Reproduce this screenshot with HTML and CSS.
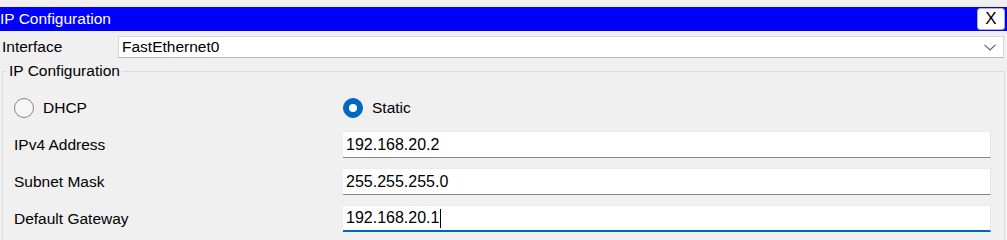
FILE: index.html
```html
<!DOCTYPE html>
<html lang="en">
<head>
  <meta charset="UTF-8" />
  <meta name="viewport" content="width=device-width, initial-scale=1.0"/>
  <title>IP Configuration</title>
  <link rel="stylesheet" href="styles.css">
</head>
<body>
  <div class="window">
    <div class="titlebar">
      <span class="title">IP Configuration</span>
      <button class="close-btn">X</button>
    </div>

    <div class="interface-row">
      <span class="interface-label">Interface</span>
      <div class="select">
        <span>FastEthernet0</span>
        <svg class="chevron" width="12" height="7" viewBox="0 0 12 7">
          <path d="M0.5 0.8 L6 6 L11.5 0.8" fill="none" stroke="#606060" stroke-width="1.1"/>
        </svg>
      </div>
    </div>

    <fieldset class="ip-group">
      <legend>IP Configuration</legend>
      <div class="form">
        <div class="radio-row">
          <label class="radio"><span class="dot"></span>DHCP</label>
          <label class="radio checked"><span class="dot"></span>Static</label>
        </div>
        <div class="field">
          <span class="field-label">IPv4 Address</span>
          <div class="textbox">192.168.20.2</div>
        </div>
        <div class="field">
          <span class="field-label">Subnet Mask</span>
          <div class="textbox">255.255.255.0</div>
        </div>
        <div class="field">
          <span class="field-label">Default Gateway</span>
          <div class="textbox focused">192.168.20.1<span class="caret"></span></div>
        </div>
      </div>
    </fieldset>
  </div>
</body>
</html>
```

FILE: styles.css
```css
body {
  margin: 0;
  font-family: 'Liberation Sans', Arial, sans-serif;
  font-size: 15.5px;
  background-color: #f0f0f0;
  color: #000;
  overflow: hidden;
}

.window {
  padding-top: 7px;
}

.titlebar {
  height: 24px;
  background-color: #0000ff;
  color: white;
  display: flex;
  justify-content: space-between;
  align-items: center;
}

.title {
  line-height: 24px;
}

.close-btn {
  width: 28px;
  height: 22px;
  margin-right: 2px;
  padding: 0;
  background-color: white;
  border: 1px solid #b4b4b4;
  border-radius: 3px;
  font-family: 'Liberation Sans', Arial, sans-serif;
  font-size: 17px;
  color: #000;
}

.interface-row {
  display: flex;
  align-items: center;
  margin-top: 5px;
  height: 22px;
}

.interface-label {
  width: 116px;
  padding-left: 2px;
}

.select {
  flex: 1;
  margin-right: 3px;
  height: 20px;
  display: flex;
  align-items: center;
  justify-content: space-between;
  padding: 0 7px 0 3px;
  background-color: white;
  border: 1px solid #d6d6d6;
  border-bottom-color: #b8b8b8;
}

.chevron {
  display: block;
}

.ip-group {
  margin: 4px 2px 0 2px;
  padding: 18px 13px 30px 4px;
  border: 1px solid #dcdcdc;
  min-width: 0;
}

.ip-group legend {
  padding: 0 2px;
  line-height: 18px;
}

.form {
  padding-left: 7px;
  display: flex;
  flex-direction: column;
  gap: 10px;
}

.radio-row {
  display: grid;
  grid-template-columns: 329px 1fr;
  height: 20px;
  margin-bottom: 3px;
}

.radio {
  display: flex;
  align-items: center;
  gap: 9px;
}

.dot {
  width: 18px;
  height: 18px;
  border: 1px solid #868686;
  border-radius: 50%;
  background-color: #f6f6f6;
  display: flex;
  align-items: center;
  justify-content: center;
}

.radio.checked .dot {
  background-color: #0067c0;
  border-color: #0067c0;
}

.radio.checked .dot::after {
  content: '';
  width: 8px;
  height: 8px;
  border-radius: 50%;
  background-color: white;
}

.field {
  display: grid;
  grid-template-columns: 329px 1fr;
  align-items: center;
  height: 27px;
}

.textbox {
  box-sizing: border-box;
  height: 27px;
  display: flex;
  align-items: center;
  padding-left: 3px;
  background-color: white;
  border: 1px solid #e6e6e6;
  border-top-color: #ececec;
  border-bottom-color: #868686;
  border-left: none;
  font-size: 16px;
}

.textbox.focused {
  border-bottom: 2px solid #0067c0;
}

.caret {
  display: inline-block;
  width: 1px;
  height: 19px;
  margin-left: 1px;
  background-color: #000;
}
```
